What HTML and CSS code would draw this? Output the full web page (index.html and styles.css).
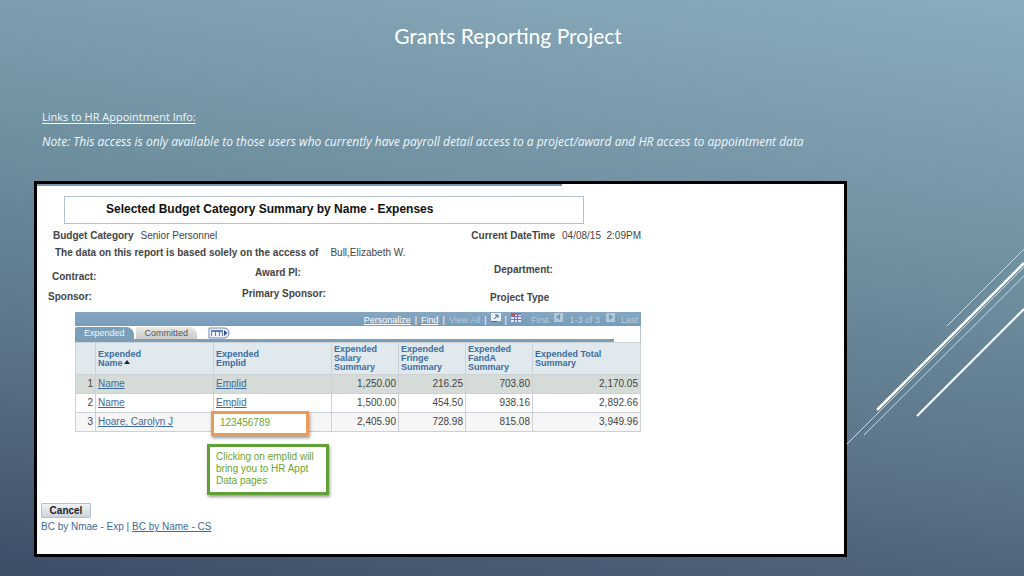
FILE: index.html
```html
<!DOCTYPE html>
<html lang="en">
<head>
<meta charset="utf-8">
<meta name="viewport" content="width=device-width, initial-scale=1">
<title>Grants Reporting Project</title>
<link rel="stylesheet" href="styles.css">
</head>
<body>
<div class="slide">
  <svg class="streaks" viewBox="0 0 180 200" width="180" height="200" fill="none" stroke="#fff" aria-hidden="true">
    <path d="M103 82 180 5M3 200 180 23M20 191 180 32" stroke="#c3dbe8" stroke-width="1"/>
    <path d="M33 166 180 19" stroke-width="2.6"/>
    <path d="M73 172 180 65" stroke-width="2.2"/>
  </svg>
  <h1 class="slide-title">Grants Reporting Project</h1>
  <section class="intro">
    <p class="intro-heading">Links to HR Appointment Info:</p>
    <p class="intro-note">Note: This access is only available to those users who currently have payroll detail access to a project/award and HR access to appointment data</p>
  </section>
  <main class="panel">
    <div class="panel-bar"></div>
    <h2 class="report-title">Selected Budget Category Summary by Name - Expenses</h2>
    <div class="facts">
      <div class="fact-row">
        <p><b>Budget Category</b><span class="fact-value">Senior Personnel</span></p>
        <p><b>Current DateTime</b><span class="fact-value">04/08/15&nbsp; 2:09PM</span></p>
      </div>
      <p class="access"><b>The data on this report is based solely on the access of</b><span class="access-name">Bull,Elizabeth W.</span></p>
    </div>
    <div class="labels">
      <div class="label-col label-col-a"><b class="inset">Contract:</b><b>Sponsor:</b></div>
      <div class="label-col label-col-b"><b class="inset-wide">Award PI:</b><b>Primary Sponsor:</b></div>
      <div class="label-col label-col-c"><b class="inset">Department:</b><b>Project Type</b></div>
    </div>
    <section class="grid">
      <div class="grid-bar">
        <a class="bright" href="#">Personalize</a><i>|</i><a class="bright" href="#">Find</a><i>|</i><span class="dim">View All</span><i>|</i>
        <svg class="bar-icon" viewBox="0 0 10 10" width="10" height="10" aria-hidden="true"><path d="M0 0h10v8H0z" fill="#e9eef2"/><path d="M3 6 7 2M4 2h3v3" fill="none" stroke="#4d6375"/><path d="M0 8h6v1H0z" fill="#57718a"/></svg>
        <i>|</i>
        <svg class="bar-icon" viewBox="0 0 10 10" width="10" height="10" aria-hidden="true"><path d="M0 0h10v9H0z" fill="#e8e5f4"/><path d="M0 3.5h10M0 6.5h10M3.5 2v7M6.5 2v7" stroke="#7270bd"/><path d="M0 0h10v2H0z" fill="#8b79b2"/><path d="M0 0h4v3H0z" fill="#d94b55"/></svg>
        <span class="pager"><span>First</span>
        <svg class="bar-icon" viewBox="0 0 9 9" width="9" height="9" aria-hidden="true"><path d="M0 0h9v9H0z" fill="#b2c8d9"/><path d="M6 1v6L2 4z" fill="#7298b6"/></svg>
        <span>1-3 of 3</span>
        <svg class="bar-icon" viewBox="0 0 9 9" width="9" height="9" aria-hidden="true"><path d="M0 0h9v9H0z" fill="#b2c8d9"/><path d="M3 1v6l4-3z" fill="#7298b6"/></svg>
        <span>Last</span></span>
      </div>
      <div class="tab-area">
        <div class="tabs">
          <button class="tab tab-on" type="button">Expended</button>
          <button class="tab" type="button">Committed</button>
          <button class="show-all" type="button" aria-label="Show all columns"><svg viewBox="0 0 22 12" width="22" height="12" aria-hidden="true"><path d="M1 1h15c3 0 5 2 5 5s-2 5-5 5H1z" fill="#edf2fa" stroke="#7185ba"/><path d="M3.500 9V4.500h11V9M7.500 4.500V9M11.500 4.500V9M3 3.500h12" fill="none" stroke="#6279b3"/><path d="m16 3 3.500 3-3.500 3z" fill="#34519b"/></svg></button>
        </div>
      </div>
      <table class="data">
        <colgroup><col class="c-num"><col class="c-id"><col class="c-id"><col class="c-amt"><col class="c-amt"><col class="c-amt"><col class="c-total"></colgroup>
        <thead><tr><th></th><th>Expended<br>Name<svg class="sort" viewBox="0 0 6 4" width="6" height="4" aria-hidden="true"><path d="M0 4 3 0l3 4z" fill="#172538"/></svg></th><th>Expended<br>Emplid</th><th>Expended<br>Salary<br>Summary</th><th>Expended<br>Fringe<br>Summary</th><th>Expended<br>FandA<br>Summary</th><th>Expended Total<br>Summary</th></tr></thead>
        <tbody>
          <tr class="shade"><td>1</td><td><a href="#">Name</a></td><td><a href="#">Emplid</a></td><td>1,250.00</td><td>216.25</td><td>703.80</td><td>2,170.05</td></tr>
          <tr><td>2</td><td><a href="#">Name</a></td><td><a href="#">Emplid</a></td><td>1,500.00</td><td>454.50</td><td>938.16</td><td>2,892.66</td></tr>
          <tr class="soft"><td>3</td><td><a href="#">Hoare, Carolyn J</a></td><td></td><td>2,405.90</td><td>728.98</td><td>815.08</td><td>3,949.96</td></tr>
        </tbody>
      </table>
      <div class="mark">123456789</div>
      <div class="callout">Clicking on emplid will<br>bring you to HR Appt<br>Data pages</div>
    </section>
    <footer class="actions">
      <button class="cancel" type="button">Cancel</button>
      <p class="links">BC by Nmae - Exp | <a href="#">BC by Name - CS</a></p>
    </footer>
  </main>
</div>
</body>
</html>
```
FILE: styles.css
```css
* { box-sizing: border-box; }
body { margin: 0; }
h1, h2, p { margin: 0; font-weight: normal; }
button { font: inherit; }

.slide {
  position: relative;
  min-height: 100vh;
  overflow: hidden;
  padding: 24px 177px 19px 34px;
  background: linear-gradient(188deg, #88adbc 0%, #7b9aab 24%, #6f909f 38%, #5b7389 68%, #3e4c66 100%);
  color: #fff;
  font-family: "Open Sans", "Noto Sans", sans-serif;
}
.streaks { position: absolute; right: 0; top: 244px; }
.slide-title {
  margin-right: -143px;
  padding-right: 8px;
  text-align: center;
  font-family: Lato, sans-serif;
  font-size: 21px;
  line-height: 24px;
}
.intro { padding: 56px 8px 0; font-size: 12px; color: #eef8fc; }
.intro-heading { font-size: 11px; line-height: 25px; text-decoration: underline; text-underline-offset: 2px; }
.intro-note { line-height: 25px; font-style: italic; white-space: nowrap; }

.panel {
  margin-top: 27px;
  padding-bottom: 21px;
  border: 3px solid #000;
  background: #fff;
  color: #444;
  font: 10px/12px "Liberation Sans", Arial, sans-serif;
}
.panel-bar { width: 65%; height: 2px; background: #7d98b2; }
.report-title {
  width: 520px;
  margin: 10px 0 0 27px;
  padding: 6px 41px 7px;
  border: 1px solid #b3c0d2;
  color: #111;
  font-size: 12px;
  line-height: 13px;
  font-weight: bold;
}
.facts { padding: 6px 0 0 16px; }
.fact-row { display: flex; width: 588px; justify-content: space-between; }
.fact-value { margin-left: 7px; }
.access { padding: 5px 0 0 2px; }
.access-name { margin-left: 12px; }

.labels { display: flex; padding: 5px 0 0 11px; }
.label-col { display: flex; flex-direction: column; }
.label-col-a { width: 194px; padding-top: 7px; gap: 8px; }
.label-col-b { width: 248px; padding-top: 3px; gap: 9px; }
.label-col-c { gap: 16px; }
.inset { padding-left: 4px; }
.inset-wide { padding-left: 13px; }

.grid { position: relative; width: 566px; margin: 8px 0 0 38px; }
.grid-bar {
  display: flex;
  justify-content: flex-end;
  align-items: center;
  gap: 4px;
  height: 14px;
  padding: 2px 3px 0 0;
  background: linear-gradient(#84a6c2, #779dba);
  color: #fff;
  font-size: 9px;
  line-height: 12px;
}
.grid-bar i { font-style: normal; }
.bright { color: #fff; }
.dim { color: #b3c9da; }
.bar-icon { align-self: flex-start; flex: none; margin-top: -1px; }
.pager { display: flex; gap: 6px; margin-left: 6px; color: #b9cedd; }
.tab-area { border-right: 1px solid #b9c3cd; }
.tabs {
  display: flex;
  align-items: flex-start;
  width: 539px;
  height: 16px;
  padding-top: 1px;
  border-bottom: 3px solid #7b9fb9;
}
.tab {
  height: 12px;
  padding: 0 9px;
  border: 0;
  border-radius: 2px 8px 0 0;
  background: linear-gradient(#e9e9e6, #c9cac7);
  color: #555;
  font-size: 9px;
  line-height: 12px;
}
.tab-on { background: #7b9fb9; color: #eef5fa; }
.tab + .tab { margin-left: 2px; }
.show-all { height: 12px; margin-left: 11px; padding: 0; border: 0; background: none; }
.show-all svg { display: block; }

.data { width: 100%; table-layout: fixed; border-collapse: collapse; border: 1px solid #b9c3cd; border-left-color: #8ea7bf; }
.c-num { width: 20px; }
.c-id { width: 118px; }
.c-amt { width: 67px; }
.data th, .data td { padding: 0 2px; border: 1px solid #cbd1d5; }
.data th {
  height: 32px;
  border-bottom: 0;
  background: #e0e9ee;
  color: #3e6c9f;
  font-size: 9px;
  line-height: 9px;
  text-align: left;
}
.data td { height: 19px; text-align: right; line-height: 12px; }
.data td:nth-child(2), .data td:nth-child(3) { text-align: left; }
.data a, .links { color: #41699c; }
.links a { color: inherit; }
.shade { background: #d5dcd8; }
.soft { background: #f6f6f6; }
.sort { margin-left: 1px; vertical-align: 2px; }

.mark, .callout { position: absolute; background: #fff; color: #6ba52f; }
.mark {
  left: 136px;
  top: 99px;
  width: 98px;
  padding: 3px 6px 4px;
  border: 3px solid #ee9a56;
  box-shadow: 1px 2px 3px #0006;
}
.callout {
  left: 132px;
  top: 132px;
  width: 122px;
  padding: 4px 6px 5px;
  border: 3px solid #61a036;
  box-shadow: 1px 2px 3px #0006;
}
.actions { padding: 71px 0 0 4px; }
.cancel {
  display: block;
  width: 50px;
  height: 15px;
  padding: 0;
  border: 1px solid #b4bfce;
  border-radius: 1px;
  background: linear-gradient(#f0f3f7, #cbd3de);
  color: #222;
  font-weight: bold;
  line-height: 12px;
}
.links { padding-top: 3px; }
```
